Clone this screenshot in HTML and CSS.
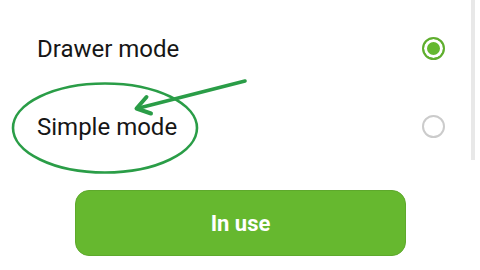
FILE: index.html
```html
<!DOCTYPE html>
<html lang="en">
<head>
    <meta charset="UTF-8">
    <meta name="viewport" content="width=device-width, initial-scale=1.0">
    <title>Home screen style</title>
    <link rel="stylesheet" href="styles.css">
</head>
<body>

    <div class="screen">
        <div class="options">
            <div class="option">
                <span class="option-label">Drawer mode</span>
                <span class="radio checked"></span>
            </div>
            <div class="option">
                <span class="option-label">Simple mode</span>
                <span class="radio"></span>
            </div>
        </div>

        <div class="actions">
            <button class="use-btn">In use</button>
        </div>

        <div class="scrollbar"></div>

        <!-- hand drawn annotation -->
        <svg class="markup" width="480" height="270" viewBox="0 0 480 270">
            <ellipse cx="105" cy="128" rx="92" ry="44.5" fill="none" stroke="#2a9d47" stroke-width="2.6"/>
            <path d="M245 81 L141 107.5" fill="none" stroke="#2a9d47" stroke-width="3.6" stroke-linecap="round"/>
            <path d="M146.5 97 L136.5 108.5 L151 113.5" fill="none" stroke="#2a9d47" stroke-width="4" stroke-linecap="round" stroke-linejoin="round"/>
        </svg>
    </div>

</body>
</html>
```

FILE: styles.css
```css
body {
    margin: 0;
    background-color: #ffffff;
    font-family: Roboto, "Noto Sans", Arial, sans-serif;
}

.screen {
    position: relative;
    width: 480px;
    height: 270px;
    overflow: hidden;
}

.options {
    display: flex;
    flex-direction: column;
    padding: 9px 35px 0 37px;
}

.option {
    height: 78px;
    display: flex;
    align-items: center;
    justify-content: space-between;
}

.option-label {
    font-size: 24px;
    color: #161616;
    margin-top: 2px;
}

.radio {
    width: 19px;
    height: 19px;
    border: 2px solid #cbcbcb;
    border-radius: 50%;
    box-sizing: content-box;
}

.radio.checked {
    border-color: #5fae2e;
    background-color: #64b82f;
    box-shadow: inset 0 0 0 3px #ffffff;
}

.actions {
    display: flex;
    padding: 25px 0 0 75px;
}

.use-btn {
    width: 331px;
    height: 66px;
    background-color: #66b82f;
    color: #ffffff;
    border: 1px solid #5ea92c;
    border-radius: 14px;
    font-family: Roboto, Arial, sans-serif;
    font-size: 22px;
    font-weight: bold;
    padding-top: 2px;
}

.scrollbar {
    position: absolute;
    top: 0;
    left: 471px;
    width: 4px;
    height: 160px;
    background-color: #e8e8e8;
}

.markup {
    position: absolute;
    top: 0;
    left: 0;
}
```
